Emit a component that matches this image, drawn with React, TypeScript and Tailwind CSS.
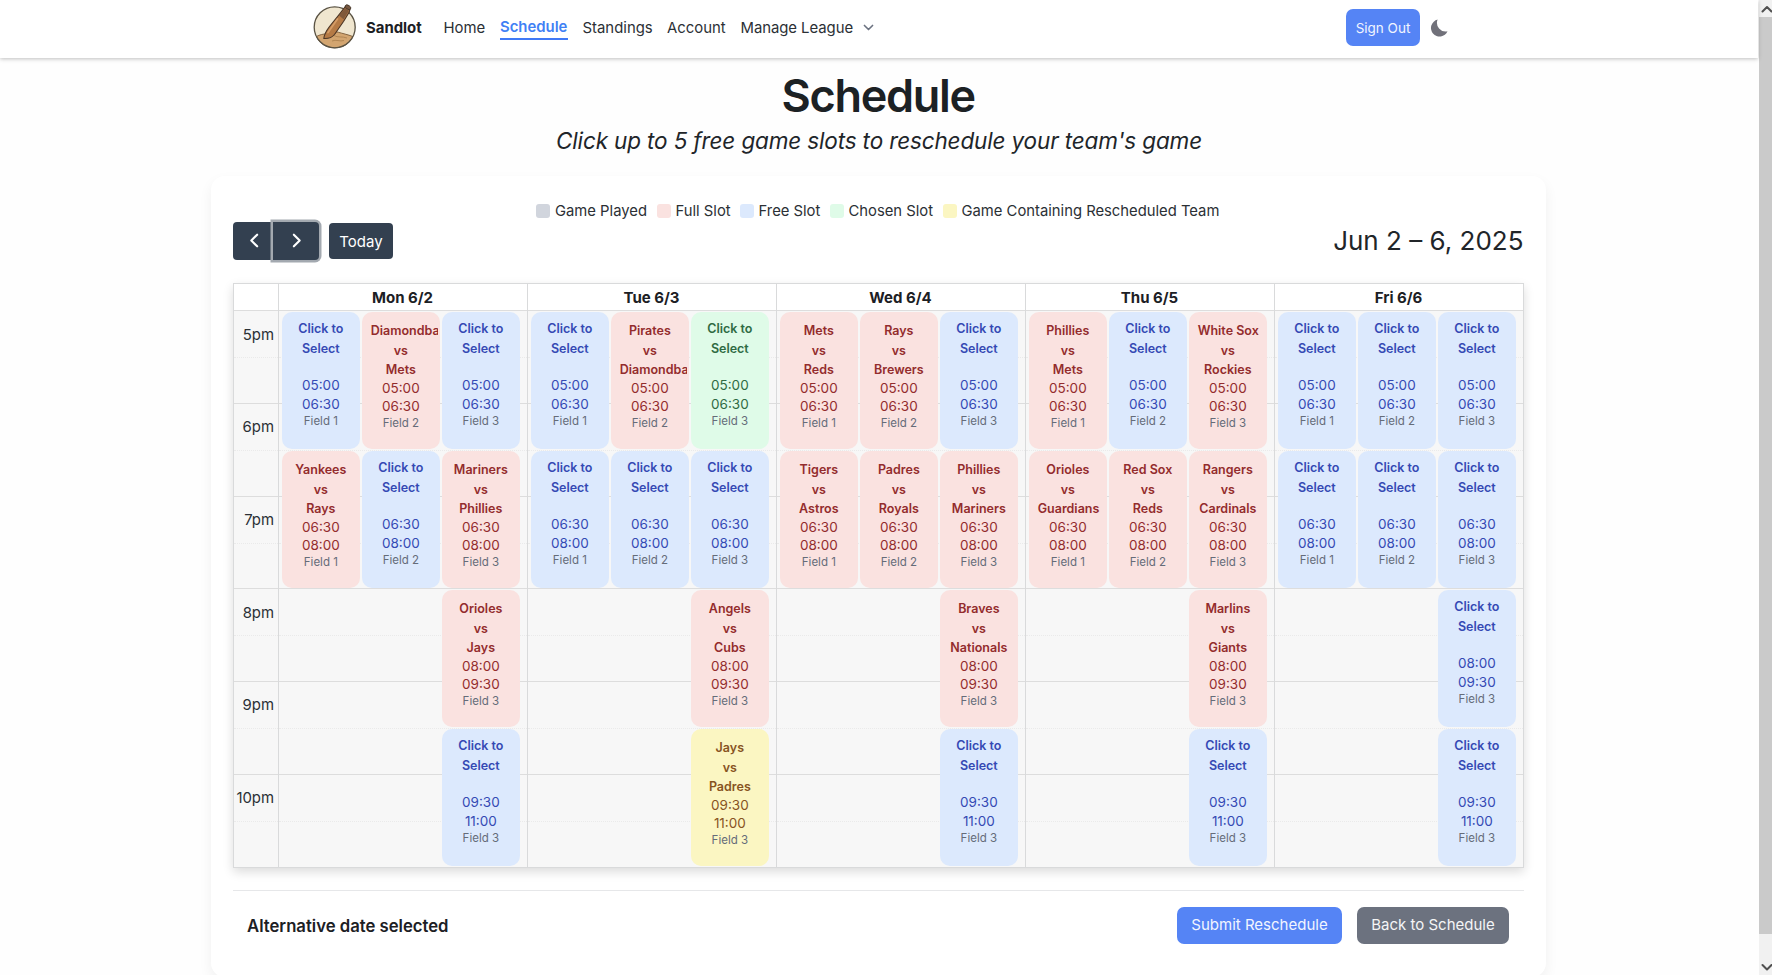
import React from "react";

type Kind = "free" | "full" | "chosen" | "moved";
type Slot = { kind: Kind; home?: string; away?: string } | null;

const free: Slot = { kind: "free" };
const chosen: Slot = { kind: "chosen" };
const game = (home: string, away: string): Slot => ({ kind: "full", home, away });

const times = [
  ["05:00", "06:30"],
  ["06:30", "08:00"],
  ["08:00", "09:30"],
  ["09:30", "11:00"],
];

const days: { label: string; rows: Slot[][] }[] = [
  {
    label: "Mon 6/2",
    rows: [
      [free, game("Diamondbacks", "Mets"), free],
      [game("Yankees", "Rays"), free, game("Mariners", "Phillies")],
      [null, null, game("Orioles", "Jays")],
      [null, null, free],
    ],
  },
  {
    label: "Tue 6/3",
    rows: [
      [free, game("Pirates", "Diamondbacks"), chosen],
      [free, free, free],
      [null, null, game("Angels", "Cubs")],
      [null, null, { kind: "moved", home: "Jays", away: "Padres" }],
    ],
  },
  {
    label: "Wed 6/4",
    rows: [
      [game("Mets", "Reds"), game("Rays", "Brewers"), free],
      [game("Tigers", "Astros"), game("Padres", "Royals"), game("Phillies", "Mariners")],
      [null, null, game("Braves", "Nationals")],
      [null, null, free],
    ],
  },
  {
    label: "Thu 6/5",
    rows: [
      [game("Phillies", "Mets"), free, game("White Sox", "Rockies")],
      [game("Orioles", "Guardians"), game("Red Sox", "Reds"), game("Rangers", "Cardinals")],
      [null, null, game("Marlins", "Giants")],
      [null, null, free],
    ],
  },
  {
    label: "Fri 6/6",
    rows: [
      [free, free, free],
      [free, free, free],
      [null, null, free],
      [null, null, free],
    ],
  },
];

const palette: Record<Kind, string> = {
  free: "bg-[#dce9fd] text-[#3549b4]",
  full: "bg-[#fae2e0] text-[#932c2d]",
  chosen: "bg-[#dffbe8] text-[#2f6b43]",
  moved: "bg-[#fbf6c2] text-[#87531f]",
};

const hours = ["5pm", "6pm", "7pm", "8pm", "9pm", "10pm"];

function EventCard({ slot, row, field }: { slot: NonNullable<Slot>; row: number; field: number }) {
  const [start, end] = times[row];
  const matchup = slot.home !== undefined;
  return (
    <div className={`mt-[1.2px] mb-[0.8px] w-[78.3px] rounded-[10px] p-[1.5px] ${palette[slot.kind]}`}>
      <div
        className={`h-full overflow-hidden whitespace-nowrap px-[7.5px] text-center text-[12.5px] ${matchup ? "pt-[8px]" : "pt-[6.2px]"}`}
      >
        {matchup ? (
          <div className="font-semibold">
            <div className="h-[19.5px] leading-[19.5px]">{slot.home}</div>
            <div className="h-[19px] leading-[19px]">vs</div>
            <div className="h-[19px] leading-[19px]">{slot.away}</div>
          </div>
        ) : (
          <div className="h-[56.700px] font-semibold leading-[19.5px]">
            Click to
            <br />
            Select
          </div>
        )}
        <div className="h-[37.5px] text-[13.5px] leading-[18.75px]">
          {start}
          <br />
          {end}
        </div>
        <div className="text-[11.5px] leading-[15px] text-[#656c79]">Field {field}</div>
      </div>
    </div>
  );
}

function GridLines() {
  return (
    <div className="absolute inset-0 grid grid-rows-6">
      {hours.map((h, i) => (
        <div key={h} className={`grid grid-rows-2 ${i ? "border-t border-[#dddddd]" : ""}`}>
          <div />
          <div className="border-t border-dotted border-[#eaeaea]" />
        </div>
      ))}
    </div>
  );
}

function Logo() {
  return (
    <svg width="46" height="46" viewBox="0 0 46 46" className="shrink-0">
      <circle cx="22.700" cy="24.300" r="20.500" fill="#f0e6cf" />
      <path d="M4.500 33.500c3-1.800 7-2.500 11.500-3 3-1.800 7-2.500 10.500-1.200 4 1.200 9 2.200 14.300 4.200C37.500 41 30.500 44.800 22.700 44.800S7.500 41 4.500 33.500z" fill="#d3a570" stroke="#7a5a38" strokeWidth="0.900" />
      <path d="M22 32.500c4 2.500 8 .5 13 2.500M20 38c4-2 8 1 12-.5" fill="none" stroke="#ae8250" strokeWidth="0.900" />
      <circle cx="22.700" cy="24.300" r="20.500" fill="none" stroke="#5a5344" strokeWidth="1.300" />
      <path d="M33.500 3.300 38 6.300 37 9.500 31.500 18.500 22.500 31.500C20 34.500 16 35.800 11.800 35.500 12.300 31 14.500 27.500 17.500 23.500L28.500 9.800z" fill="#b57a45" stroke="#4b3525" strokeWidth="1.100" strokeLinejoin="round" />
      <path d="M33.300 5 37 7.800 31.500 16.300 27 12.500z" fill="#80593a" />
      <path d="M25.500 16 16 29.500" stroke="#d59c66" strokeWidth="1.800" strokeLinecap="round" />
      <ellipse cx="36" cy="4.200" rx="3.100" ry="1.900" transform="rotate(33 36 4.200)" fill="#775840" stroke="#46382b" strokeWidth="0.900" />
    </svg>
  );
}

function Chevron({ d, className }: { d: string; className: string }) {
  return (
    <svg viewBox="0 0 16 16" className={className} fill="none" stroke="currentColor" strokeWidth="2" strokeLinecap="round" strokeLinejoin="round">
      <path d={d} />
    </svg>
  );
}

function Nav() {
  return (
    <header className="relative z-10 h-[58px] bg-white shadow-[0_1px_4px_rgba(0,0,0,0.25)]">
      <div className="flex h-[57px] pl-[312px] text-[14.900px] leading-[22px] text-[#2b3035]">
        <div className="pt-[3px]">
          <Logo />
        </div>
        <div className="ml-[8px] w-[77.500px] pt-[17px] font-bold text-[#1c2024]">Sandlot</div>
        <div className="w-[56.500px] pt-[17px]">Home</div>
        <div className="mr-[15px] mt-[16px] h-[24px] w-[67.500px] border-b-2 border-[#4079f6] font-semibold text-[#4080f5]">Schedule</div>
        <div className="w-[84.500px] pt-[17px]">Standings</div>
        <div className="w-[73.500px] pt-[17px]">Account</div>
        <div className="w-[121px] pt-[17px] tracking-[-0.05px]">Manage League</div>
        <Chevron d="M3 5.500l5 5 5-5" className="mt-[21px] size-[13px] text-[#6b7280]" />
        <div className="ml-auto mr-[10px] mt-[9px] h-[37px] w-[74px] rounded-[7px] bg-[#5584f5] text-center text-[13.500px] leading-[38px] text-[#f1f5ff]">
          Sign Out
        </div>
        <svg viewBox="0 0 18 18" className="mr-[310px] mt-[19px] size-[18px]" fill="#71717a">
          <path d="M7.600.6A8.600 8.600 0 1 0 17.500 12.300 8.700 8.700 0 0 1 7.600.6z" />
        </svg>
      </div>
    </header>
  );
}

function Legend() {
  const items = [
    ["Game Played", "bg-[#d1d5dd]", "w-[120.500px]"],
    ["Full Slot", "bg-[#fae2e0]", "w-[83px]"],
    ["Free Slot", "bg-[#dce9fd]", "w-[90px]"],
    ["Chosen Slot", "bg-[#dffbe8]", "w-[113px]"],
    ["Game Containing Rescheduled Team", "bg-[#fbf6c2]", "w-[279px]"],
  ];
  return (
    <div className="ml-[303.500px] flex h-[20px] text-[14.800px] leading-[20px] text-[#2b3035]">
      {items.map(([label, color, width]) => (
        <div key={label} className={`flex shrink-0 items-center whitespace-nowrap ${width}`}>
          <span className={`mr-[5px] size-[14px] rounded-[3px] ${color}`} />
          {label}
        </div>
      ))}
    </div>
  );
}

function Calendar() {
  return (
    <div className="flex h-[585px] w-[1291px] border border-[#d9dadb] bg-[#f7f7f7] shadow-[0_4px_10px_rgba(0,0,0,0.14)]">
      <div className="flex w-[44px] flex-col">
        <div className="h-[27px] border-b border-[#dddddd] bg-white" />
        <div className="relative flex-1">
          <GridLines />
          <div className="relative grid h-full grid-rows-6 pr-[3.500px] text-right text-[14.900px] leading-[22px] text-[#2b3035]">
            {hours.map((h) => (
              <div key={h} className="pt-[13.300px]">{h}</div>
            ))}
          </div>
        </div>
      </div>
      {days.map((day) => (
        <div key={day.label} className="flex w-[249px] flex-col border-l border-[#d9dadb]">
          <div className="h-[27px] border-b border-[#dddddd] bg-white text-center text-[15px] font-bold leading-[27px] text-[#1c2024]">
            {day.label}
          </div>
          <div className="relative flex-1">
            <GridLines />
            <div className="relative grid h-full grid-cols-[80px_80px_80px] grid-rows-4 pl-[3.200px]">
              {day.rows.map((row, r) =>
                row.map((slot, c) => (slot ? <EventCard key={`${r}${c}`} slot={slot} row={r} field={c + 1} /> : <div key={`${r}${c}`} />)),
              )}
            </div>
          </div>
        </div>
      ))}
    </div>
  );
}

export default function App() {
  return (
    <div className="flex h-[975px] w-[1772px] overflow-hidden bg-[#fefefe] font-['Inter',sans-serif] text-[#212529]">
      <div className="w-[1758px] shrink-0">
        <Nav />
        <h1 className="mt-[9px] h-[59px] pr-[1.500px] text-center text-[45px] font-semibold leading-[58px] tracking-[-1.300px] text-[#1c2124]">Schedule</h1>
        <p className="h-[30px] text-center text-[22.500px] italic leading-[30px] tracking-[-0.140px]">Click up to 5 free game slots to reschedule your team's game</p>
        <section className="ml-[210.500px] mt-[20px] h-[801px] w-[1335px] rounded-[14px] bg-white px-[22px] pt-[24.500px] shadow-[0_6px_14px_rgba(0,0,0,0.06)]">
          <Legend />
          <div className="flex h-[40px] items-center text-white">
            <button className="flex h-[38px] w-[40px] items-center justify-center rounded-l-[4px] bg-[#334050] pl-[3px]">
              <Chevron d="M10.500 2.500L5 8l5.500 5.500" className="size-[17px]" />
            </button>
            <button className="flex h-[38px] w-[46px] items-center justify-center rounded-r-[4px] bg-[#334050] pl-[2px] shadow-[0_0_0_2.500px_#a3a9b0]">
              <Chevron d="M5.500 2.500L11 8l-5.500 5.500" className="size-[17px]" />
            </button>
            <button className="ml-[10.500px] h-[36px] w-[64px] rounded-[4px] bg-[#334050] text-[15px] leading-[37px]">Today</button>
            <h2 className="ml-auto text-[26px] leading-[40px] text-[#212529]">Jun 2 – 6, 2025</h2>
          </div>
          <div className="h-[22px]" />
          <Calendar />
          <div className="mt-[22.500px] flex border-t border-[#e6e7e9] pl-[14.500px] pr-[14.500px] pt-[15.500px]">
            <div className="flex-1 text-[16.700px] font-semibold leading-[38px] text-[#1c2024]">Alternative date selected</div>
            <button className="h-[37px] w-[165px] rounded-[7px] bg-[#5584f5] pt-[1px] text-[15px] text-[#f1f5ff]">Submit Reschedule</button>
            <button className="ml-[15px] h-[37px] w-[152px] rounded-[7px] bg-[#6c727f] pt-[1px] text-[15px] text-[#f4f5f6]">Back to Schedule</button>
          </div>
        </section>
      </div>
      <div className="ml-[1px] flex w-[17px] shrink-0 flex-col bg-[#f1f1f1]">
        <Chevron d="M3.500 10.500L8 6l4.500 4.500" className="mt-[1px] size-[16px] text-[#505050]" />
        <div className="h-[918px] bg-[#cacaca]" />
        <Chevron d="M3.500 6L8 10.500l4.500-4.500" className="mt-[25px] size-[16px] text-[#505050]" />
      </div>
    </div>
  );
}
